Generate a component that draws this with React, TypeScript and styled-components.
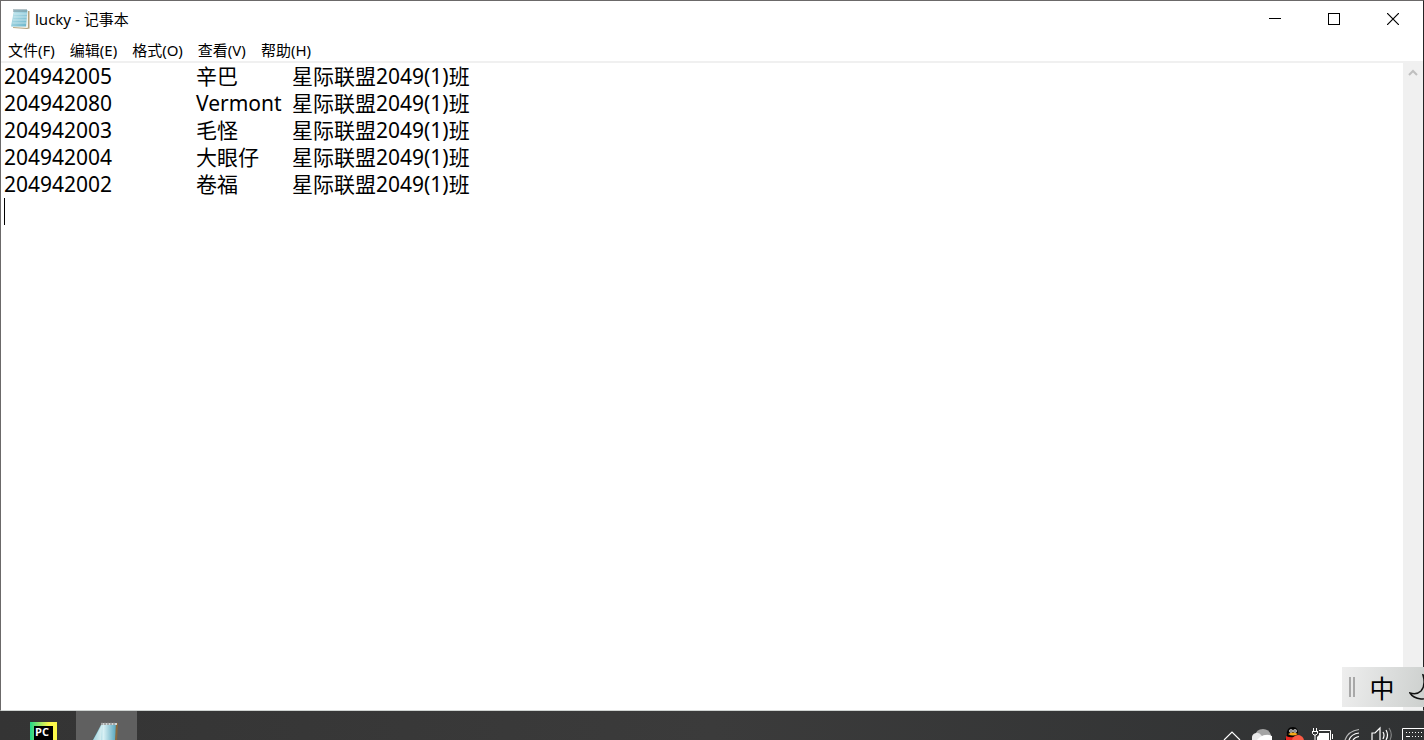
import React, { useState } from "react";
import styled, { createGlobalStyle } from "styled-components";

const GlobalStyle = createGlobalStyle`
  *, *::before, *::after { box-sizing: border-box; }
  body {
    margin: 0;
    overflow: hidden;
    background: #383838;
    color: #000;
    font-family: "Noto Sans", "Noto Sans CJK SC", sans-serif;
    font-size: 15px;
  }
  button {
    padding: 0;
    border: 0;
    background: none;
    color: inherit;
    font: inherit;
  }
  svg { display: block; }
`;

const Desktop = styled.div`
  display: flex;
  flex-direction: column;
  height: 100vh;
`;

const Window = styled.main`
  flex: 1;
  min-height: 0;
  display: flex;
  flex-direction: column;
  background: #fff;
  border: 1px solid #6b6969;
  border-right-color: #262425;
  border-bottom-color: #d0d4d2;
`;

const TitleBar = styled.header`
  display: flex;
  align-items: center;
  height: 36px;
  padding: 0 1px 0 9px;
`;

const Title = styled.h1`
  flex: 1;
  margin: 0 0 0 4px;
  font-size: 15px;
  font-weight: 400;
  line-height: 20px;
`;

const WindowControls = styled.div`
  display: flex;
  height: 100%;
`;

const WindowButton = styled.button`
  display: grid;
  place-items: center;
  width: 59px;
  &:hover { background: #e5e5e5; }
`;

const MenuBar = styled.nav`
  display: flex;
  gap: 15px;
  height: 26px;
  padding: 2px 0 0 7px;
  border-bottom: 2px solid #f0f0f0;
`;

const MenuButton = styled.button`
  font-size: 15px;
  line-height: 22px;
  white-space: nowrap;
`;

const EditorArea = styled.section`
  flex: 1;
  min-height: 0;
  display: flex;
  position: relative;
`;

const Editor = styled.textarea`
  flex: 1;
  min-width: 0;
  margin: 0;
  padding: 0 3px;
  border: 0;
  outline: 0;
  resize: none;
  overflow: hidden;
  background: #fff;
  color: #000;
  caret-color: transparent;
  font-family: "Noto Sans", "Noto Sans CJK SC", sans-serif;
  font-size: 21px;
  line-height: 27px;
  tab-size: 96px;
  white-space: pre;
`;

const Caret = styled.span`
  position: absolute;
  top: 135px;
  left: 3px;
  width: 1px;
  height: 27px;
  background: #000;
  pointer-events: none;
`;

const ScrollTrack = styled.div`
  width: 20px;
  background: #f0f0f0;
`;

const ScrollButton = styled.button`
  display: grid;
  place-items: center;
  width: 20px;
  height: 20px;
`;

const InputMethodBar = styled.aside`
  position: absolute;
  right: 0;
  bottom: 33px;
  display: flex;
  align-items: center;
  width: 82px;
  height: 40px;
  padding-left: 7px;
  overflow: hidden;
  background: linear-gradient(100deg, #eeeeee, #dadcdb 60%, #cdd0ce);
`;

const Grip = styled.span`
  flex: none;
  width: 6px;
  height: 20px;
  border: solid #a8a8a8;
  border-width: 0 2px;
`;

const LanguageButton = styled.button`
  flex: none;
  width: 54px;
  font-family: "Noto Sans CJK SC", sans-serif;
  font-size: 25px;
  line-height: 40px;
`;

const ModeButton = styled.button`
  flex: none;
`;

const Taskbar = styled.footer`
  display: flex;
  justify-content: space-between;
  height: 29px;
  overflow: hidden;
  background: linear-gradient(90deg, #343434, #3b3b3b 50%, #303233);
`;

const TaskGroup = styled.div`
  display: flex;
  padding-left: 15px;
`;

const TaskButton = styled.button<{ $active?: boolean }>`
  width: 61px;
  background: ${(p) => (p.$active ? "#606060" : "transparent")};
`;

const Tray = styled.div`
  display: flex;
`;

const TrayButton = styled.button`
  flex: none;
`;

const menus = ["文件(F)", "编辑(E)", "格式(O)", "查看(V)", "帮助(H)"];

const students = [
  ["204942005", "辛巴"],
  ["204942080", "Vermont"],
  ["204942003", "毛怪"],
  ["204942004", "大眼仔"],
  ["204942002", "卷福"],
];

const initialText =
  students.map(([id, name]) => `${id}\t${name}\t星际联盟2049(1)班`).join("\n") + "\n";

function NotepadIcon() {
  return (
    <svg width="21" height="22" viewBox="0 0 21 22" aria-hidden="true">
      <defs>
        <linearGradient id="paper" x1="0" y1="0" x2="1" y2="1">
          <stop offset="0" stopColor="#c5e8ef" />
          <stop offset="1" stopColor="#69b4ca" />
        </linearGradient>
      </defs>
      <path d="M5 3H19.500V20.500L17 21L3 20Z" fill="#b4a27e" />
      <path d="M4 2.500H18V19.500L17 20L2 19Z" fill="#f3f4ed" />
      <path d="M4 2H17.500L16 18.500H1Z" fill="url(#paper)" />
      <path d="M4 6H17M3.500 9H17M3 12H16.500M2.500 15H16.500" stroke="#e4f5f7" opacity=".6" />
      <path d="M4 1V4M6 1V4M8 1V4M10 1V4M12 1V4M14 1V4M16 1V4" stroke="#6b8791" />
    </svg>
  );
}

function PyCharmIcon() {
  return (
    <svg width="61" height="29" viewBox="0 0 61 29" aria-hidden="true">
      <defs>
        <linearGradient id="pycharm" x1="0" y1="0" x2="1" y2="0">
          <stop offset="0" stopColor="#21d789" />
          <stop offset=".4" stopColor="#a6e862" />
          <stop offset=".7" stopColor="#fcf84a" />
        </linearGradient>
      </defs>
      <rect x="15" y="11" width="27" height="27" fill="url(#pycharm)" />
      <rect x="19" y="15" width="19" height="19" fill="#000" />
      <text x="20" y="25" fill="#fff" fontFamily="Open Sans, sans-serif" fontSize="11" fontWeight="700">PC</text>
    </svg>
  );
}

function TaskNotepadIcon() {
  return (
    <svg width="61" height="29" viewBox="0 0 61 29" aria-hidden="true">
      <defs>
        <linearGradient id="task-paper" x1="0" y1="0" x2="1" y2="0">
          <stop offset="0" stopColor="#3a9db5" />
          <stop offset=".45" stopColor="#d9f1f5" />
          <stop offset="1" stopColor="#58a6bd" />
        </linearGradient>
      </defs>
      <path d="M27 12H42L41 29H18Z" fill="#8a683e" />
      <path d="M26 12H40L39 29H17Z" fill="url(#task-paper)" />
      <path d="M17 29L26 14L25 29Z" fill="#eaf6f7" opacity=".6" />
      <path d="M25 12H41V14H25Z" fill="#d0d5d5" />
      <path d="M26 11V14M29 11V14M32 11V14M35 11V14M38 11V14" stroke="#777" />
    </svg>
  );
}

const trayIcons = [
  {
    label: "显示隐藏的图标",
    drawing: <path d="M7 29L15 21L23 29" fill="none" stroke="#fff" strokeWidth="1.200" />,
  },
  {
    label: "OneDrive",
    drawing: (
      <>
        <path d="M8 25Q9 18 16 18Q22 18 24 24V29H8Z" fill="#a4a4a4" />
        <path d="M5 29Q4 23 9 22Q12 21 15 25Q25 21 25 29Z" fill="#e9e9e9" />
        <path d="M10 29Q16 22 25 25V29Z" fill="#fff" />
      </>
    ),
  },
  {
    label: "QQ",
    drawing: (
      <>
        <path d="M10 24Q9 16 16 16Q22 16 21 25L24 29H8Z" fill="#050505" />
        <circle cx="14" cy="20" r="1.800" fill="#fff" />
        <circle cx="18" cy="20" r="1.800" fill="#fff" />
        <circle cx="14" cy="20" r=".8" />
        <circle cx="18" cy="20" r=".8" />
        <path d="M11 23Q16 20 21 23Q16 26 11 23" fill="#f8aa18" />
        <path d="M9 25Q15 28 23 24V29H9Z" fill="#e82620" />
        <circle cx="21" cy="30" r="6" fill="#fa5a45" />
      </>
    ),
  },
  {
    label: "电池",
    drawing: (
      <>
        <path d="M12 19.500H23.500V29M25.500 23V28" fill="none" stroke="#fff" />
        <path d="M12 22H22V29H10V26L12 24Z" fill="#fff" />
        <path d="M6.500 17V20M9.500 17V20M5 20.500H11M5.500 20V22.500L7 24H9L10.500 22.500V20M8 24V29" fill="none" stroke="#fff" />
      </>
    ),
  },
  {
    label: "无线网络",
    drawing: (
      <g fill="none" stroke="#fff" strokeWidth="1.200">
        <path d="M8 29Q11 20 22 18.500" opacity=".65" />
        <path d="M12 29Q14 23 22 22" />
        <path d="M16 29Q18 26 22 25.500" />
      </g>
    ),
  },
  {
    label: "音量",
    drawing: (
      <g fill="none" stroke="#fff" strokeWidth="1.200">
        <path d="M5 29V22H8L13 17V29" />
        <path d="M16 21Q18 24 16 28" />
        <path d="M19 19Q22 24 19 29" />
        <path d="M22 17Q26 23 23 29" opacity=".4" />
      </g>
    ),
  },
];

export default function App() {
  const [text, setText] = useState(initialText);

  return (
    <>
      <GlobalStyle />
      <Desktop>
        <Window>
          <TitleBar>
            <NotepadIcon />
            <Title>lucky - 记事本</Title>
            <WindowControls>
              <WindowButton aria-label="最小化">
                <svg width="12" height="12" viewBox="0 0 12 12">
                  <path d="M0 5.500H12" stroke="#000" />
                </svg>
              </WindowButton>
              <WindowButton aria-label="最大化">
                <svg width="12" height="12" viewBox="0 0 12 12">
                  <rect x=".5" y=".5" width="11" height="11" fill="none" stroke="#000" />
                </svg>
              </WindowButton>
              <WindowButton aria-label="关闭">
                <svg width="12" height="12" viewBox="0 0 12 12">
                  <path d="M0 0L12 12M12 0L0 12" stroke="#000" strokeWidth="1.200" />
                </svg>
              </WindowButton>
            </WindowControls>
          </TitleBar>
          <MenuBar>
            {menus.map((menu) => (
              <MenuButton key={menu}>{menu}</MenuButton>
            ))}
          </MenuBar>
          <EditorArea>
            <Editor
              aria-label="文本编辑器"
              spellCheck={false}
              value={text}
              onChange={(event) => setText(event.target.value)}
            />
            <Caret />
            <ScrollTrack>
              <ScrollButton aria-label="向上滚动">
                <svg width="10" height="8" viewBox="0 0 10 8">
                  <path d="M1 6L5 2L9 6" fill="none" stroke="#bfbfbf" strokeWidth="2" />
                </svg>
              </ScrollButton>
            </ScrollTrack>
          </EditorArea>
        </Window>
        <Taskbar>
          <TaskGroup>
            <TaskButton aria-label="PyCharm">
              <PyCharmIcon />
            </TaskButton>
            <TaskButton $active aria-label="记事本">
              <TaskNotepadIcon />
            </TaskButton>
          </TaskGroup>
          <Tray>
            {trayIcons.map(({ label, drawing }) => (
              <TrayButton key={label} aria-label={label}>
                <svg width="30" height="29" viewBox="0 0 30 29">{drawing}</svg>
              </TrayButton>
            ))}
            <TrayButton aria-label="触摸键盘">
              <svg width="27" height="29" viewBox="0 0 27 29">
                <path d="M27 17.500H5.500V29" fill="none" stroke="#fff" />
                <path d="M9 21.500H27M9 25.500H27" stroke="#fff" strokeDasharray="1 2" />
                <path d="M9 25.500H13" stroke="#fff" />
              </svg>
            </TrayButton>
          </Tray>
        </Taskbar>
      </Desktop>
      <InputMethodBar aria-label="输入法">
        <Grip />
        <LanguageButton>中</LanguageButton>
        <ModeButton aria-label="半角">
          <svg width="28" height="28" viewBox="0 0 28 28">
            <path d="M14 2Q17 12 12 18Q8 22 1 20Q4 25 12 26Q22 26 25 17Q27 6 14 2Z" fill="none" stroke="#111" strokeWidth="1.500" />
          </svg>
        </ModeButton>
      </InputMethodBar>
    </>
  );
}
